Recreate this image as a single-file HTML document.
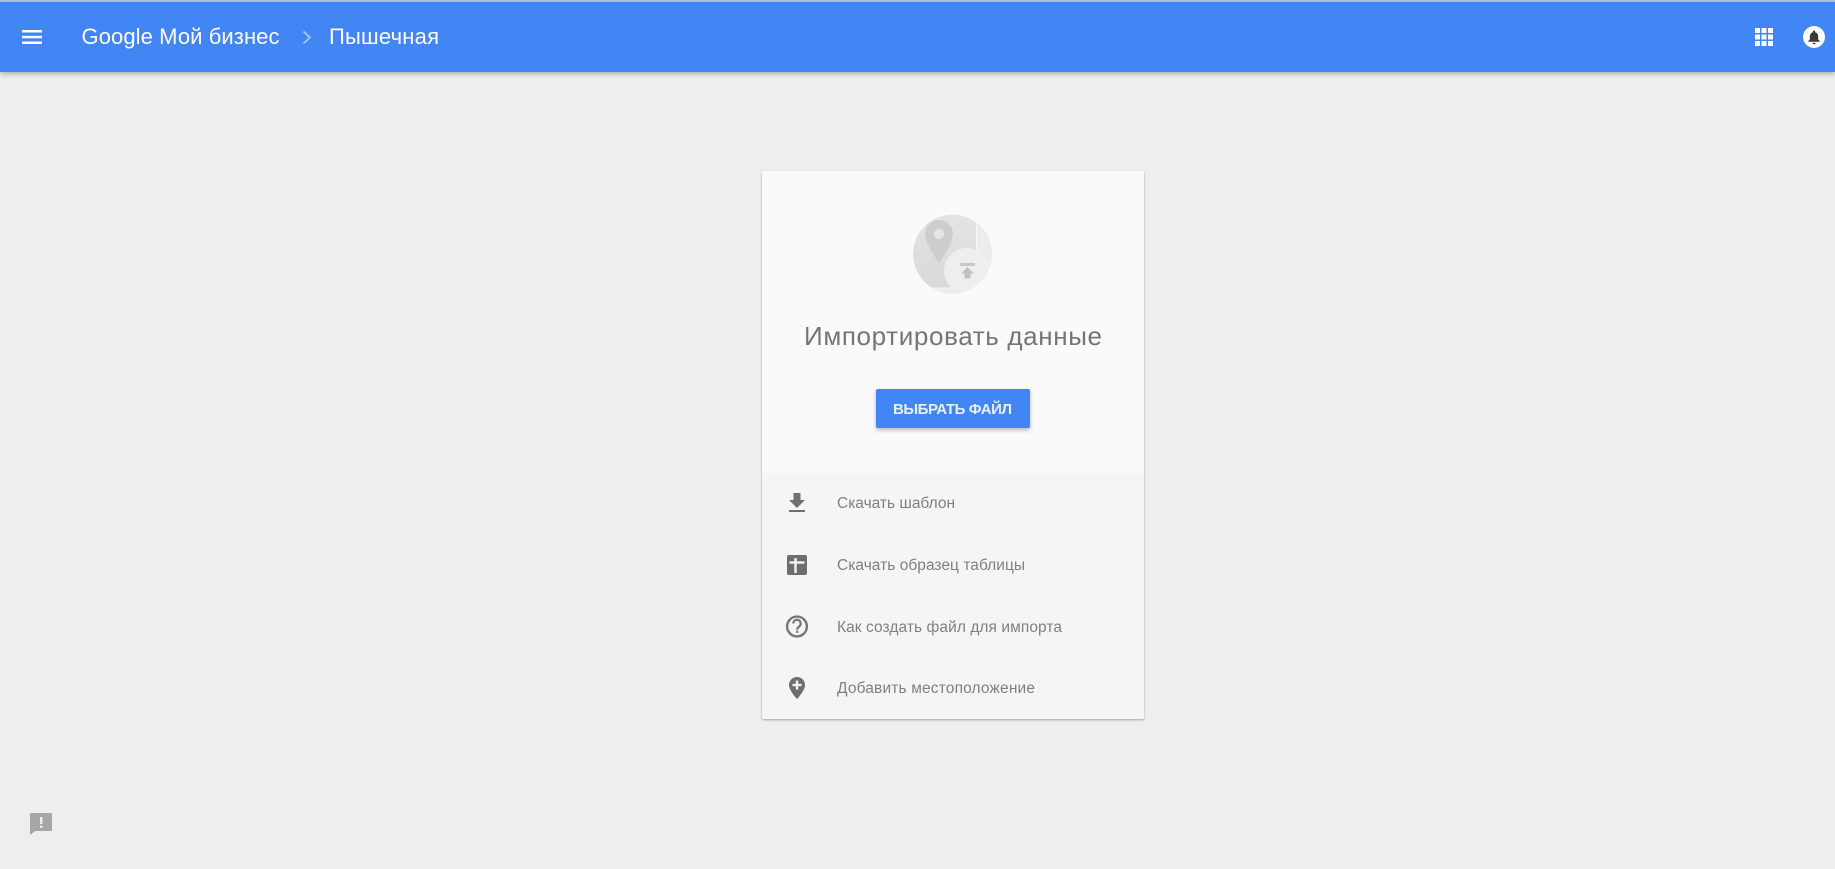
<!DOCTYPE html>
<html lang="ru">
<head>
<meta charset="utf-8">
<title>Google Мой бизнес</title>
<style>
html,body{margin:0;padding:0;width:1835px;height:869px;overflow:hidden;background:#eeeeee;font-family:"Liberation Sans",sans-serif}
.topline{position:absolute;left:0;top:0;width:1835px;height:2px;background:#b8bcc4;z-index:3}
.bar{position:absolute;left:0;top:0;width:1835px;height:72px;background:#4285f4;box-shadow:0 2px 5px rgba(0,0,0,.28)}
.card{position:absolute;left:762px;top:171px;width:382px;height:548px;background:#fafafa;border-radius:2px;box-shadow:0 1px 2px rgba(0,0,0,.32)}
.foot{position:absolute;left:0;top:302px;width:382px;height:246px;background:#f5f5f5;border-radius:0 0 2px 2px}
.btn{position:absolute;left:876px;top:389px;width:154px;height:39px;background:#4285f4;border-radius:2px;box-shadow:0 2px 4px rgba(0,0,0,.28)}
svg{position:absolute;left:0;top:0;z-index:4;filter:blur(.3px)}
text{font-family:"Liberation Sans",sans-serif}
</style>
</head>
<body>
<div class="bar"></div>
<div class="topline"></div>
<div class="card"><div class="foot"></div></div>
<div class="btn"></div>
<svg width="1835" height="869" viewBox="0 0 1835 869" xmlns="http://www.w3.org/2000/svg">
<defs>
<clipPath id="c"><circle cx="952.5" cy="254" r="39.5"/></clipPath>
<linearGradient id="g" x1="0" y1="0" x2="0" y2="1"><stop offset="0" stop-color="#e4e4e4"/><stop offset="1" stop-color="#d8d8d8"/></linearGradient>
</defs>
<!-- header -->
<g fill="#fff">
<rect x="22" y="30" width="20" height="2.500"/>
<rect x="22" y="35.800" width="20" height="2.500"/>
<rect x="22" y="41.500" width="20" height="2.500"/>
</g>
<text x="81.500" y="44" font-size="22" fill="#fff" textLength="198" lengthAdjust="spacing">Google Мой бизнес</text>
<path d="M303.500 31.500L310 37.500L303.500 43.500" fill="none" stroke="#a9c8fa" stroke-width="1.800"/>
<text x="329" y="44" font-size="22" fill="#fff" textLength="110" lengthAdjust="spacing">Пышечная</text>
<g fill="#fff">
<rect x="1755" y="28" width="5" height="5"/><rect x="1761.500" y="28" width="5" height="5"/><rect x="1768" y="28" width="5" height="5"/>
<rect x="1755" y="34.500" width="5" height="5"/><rect x="1761.500" y="34.500" width="5" height="5"/><rect x="1768" y="34.500" width="5" height="5"/>
<rect x="1755" y="41" width="5" height="5"/><rect x="1761.500" y="41" width="5" height="5"/><rect x="1768" y="41" width="5" height="5"/>
<circle cx="1814" cy="37" r="11"/>
</g>
<path d="M1814 30.500a1.200 1.200 0 0 1 1.200 1.200v.5c2 .6 3 2.300 3 4.300v3l1.500 1.500v.8h-11.400v-.8l1.500-1.500v-3c0-2 1-3.700 3-4.300v-.5a1.200 1.200 0 0 1 1.200-1.200zM1812.500 42.800h3a1.500 1.500 0 0 1-3 0z" fill="#3a3a3a"/>

<!-- illustration -->
<g clip-path="url(#c)">
<circle cx="952.500" cy="254" r="39.500" fill="url(#g)"/>
<rect x="977" y="215" width="16" height="60" fill="#ececec"/>
<rect x="976" y="215" width="1.200" height="60" fill="#f6f6f6"/>
<rect x="913" y="288" width="50" height="6" fill="#ececec"/>
<rect x="913" y="287.500" width="50" height="1" fill="#f4f4f4"/>
<path d="M939 220c-7.800 0-14 6.200-14 14 0 10 14 29 14 29s14-19 14-29c0-7.800-6.200-14-14-14z" fill="#cdcdcd"/>
<circle cx="939" cy="234" r="5" fill="#e6e6e6"/>
<circle cx="967" cy="271" r="23" fill="#eeeeee"/>
</g>
<rect x="960" y="263" width="15" height="3" fill="#c8c8c8"/>
<path d="M967.500 267L974 273.500H970.500V278.500H964.500V273.500H961z" fill="#c0c0c0"/>

<!-- title -->
<text x="804" y="345" font-size="26" fill="#757575" textLength="298" lengthAdjust="spacing">Импортировать данные</text>

<!-- button -->
<text x="893" y="414" font-size="15" font-weight="700" fill="#e8f0fe" textLength="119" lengthAdjust="spacing">ВЫБРАТЬ ФАЙЛ</text>

<!-- list -->
<g font-size="15.500" fill="#808080">
<text x="837" y="508" textLength="118" lengthAdjust="spacing">Скачать шаблон</text>
<text x="837" y="570" textLength="188" lengthAdjust="spacing">Скачать образец таблицы</text>
<text x="837" y="632" textLength="225" lengthAdjust="spacing">Как создать файл для импорта</text>
<text x="837" y="693" textLength="198" lengthAdjust="spacing">Добавить местоположение</text>
</g>

<!-- list icons -->
<path d="M793.500 493H800.500V500H805L797 508L789 500H793.500z" fill="#707070"/>
<rect x="789" y="510" width="16" height="2" fill="#707070"/>

<rect x="787" y="555" width="20" height="20" rx="2" fill="#6e6e6e"/>
<rect x="789.500" y="561.300" width="15" height="2.400" fill="#f5f5f5"/>
<rect x="794.300" y="558" width="2.400" height="15" fill="#f5f5f5"/>

<circle cx="797" cy="626.500" r="9.900" fill="none" stroke="#777" stroke-width="2.400"/>
<path d="M793.300 623.500a3.700 3.700 0 1 1 6.100 2.800c-1.200 1-2.200 1.600-2.200 3.400" fill="none" stroke="#777" stroke-width="2.200"/>
<rect x="796.100" y="630.700" width="2.200" height="2.200" fill="#777"/>

<path d="M797 677c-4.500 0-8 3.500-8 8 0 5.700 8 14 8 14s8-8.300 8-14c0-4.500-3.500-8-8-8z" fill="#6e6e6e"/>
<rect x="792.500" y="683.800" width="9" height="2.400" fill="#f5f5f5"/>
<rect x="795.800" y="680.500" width="2.400" height="9" fill="#f5f5f5"/>

<!-- feedback -->
<path d="M31 813H51a1 1 0 0 1 1 1V830a1 1 0 0 1-1 1H35L30 835V814a1 1 0 0 1 1-1z" fill="#a6a6a6"/>
<rect x="40" y="817" width="2.400" height="7" fill="#eee"/>
<rect x="40" y="825.500" width="2.400" height="2.500" fill="#eee"/>
</svg>
</body>
</html>
